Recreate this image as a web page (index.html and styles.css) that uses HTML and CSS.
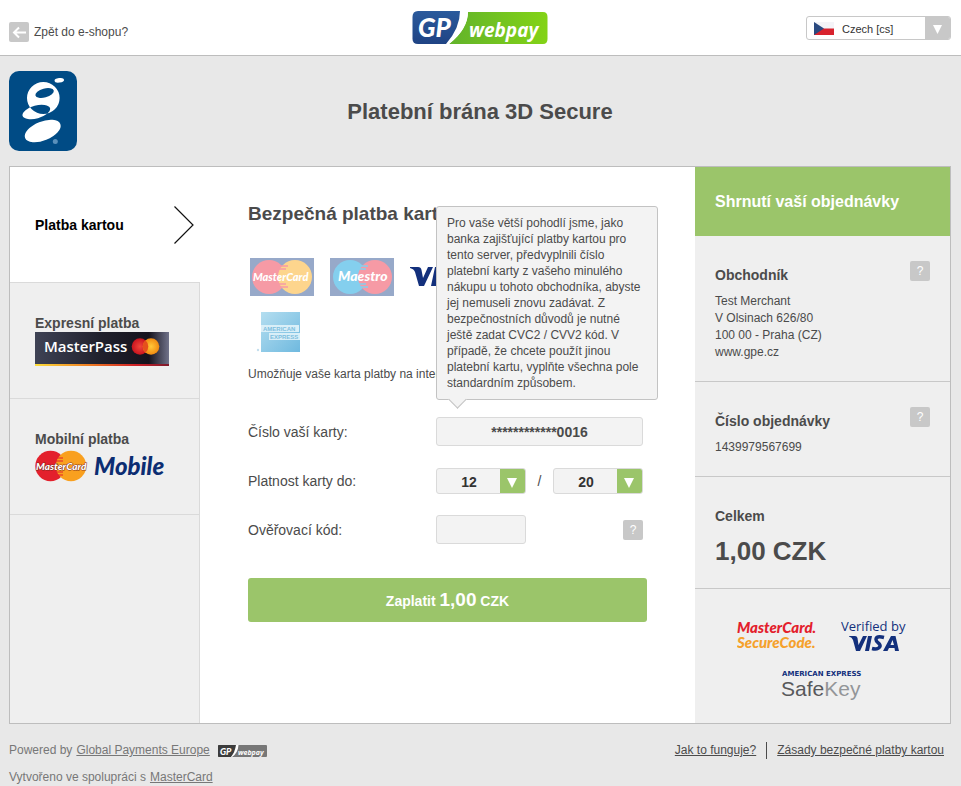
FILE: index.html
```
<!DOCTYPE html>
<html lang="cs">
<head>
    <meta charset="UTF-8">
    <meta name="viewport" content="width=device-width, initial-scale=1.0">
    <title>GP webpay</title>
    <link rel="stylesheet" href="styles.css">
</head>
<body>

<header class="topbar">
    <a class="back" href="#">
        <svg width="20" height="20" viewBox="0 0 20 20">
            <rect width="20" height="20" rx="2" fill="#c8c8c8"/>
            <path d="M17 10.500H5M10 5.500L5 10.500L10 15.500" fill="none" stroke="#fff" stroke-width="2"/>
        </svg>
        Zpět do e-shopu?
    </a>
    <svg class="brand" width="136" height="34" viewBox="0 0 136 34" role="img" aria-label="GP webpay">
        <defs>
            <linearGradient id="blue" x1="0" y1="0" x2="0" y2="1">
                <stop offset="0" stop-color="#2a5a9c"/><stop offset="1" stop-color="#1f4384"/>
            </linearGradient>
            <linearGradient id="green" x1="0" y1="0" x2="1" y2="0">
                <stop offset="0" stop-color="#62b32b"/><stop offset="1" stop-color="#83d316"/>
            </linearGradient>
        </defs>
        <path d="M56 1H131Q135.500 1 135.500 6V28Q135.500 33 131 33H37Q56 18 56 1Z" fill="url(#green)"/>
        <path d="M6 0H50Q50 17 36 33H6Q.5 33 .5 28V6Q.5 0 6 0Z" fill="url(#blue)"/>
        <path d="M48 0H56Q56 18 37 33H34Q48 17 48 0Z" fill="#fff"/>
        <text x="6" y="26" class="logo-gp">GP</text>
        <text x="57" y="26" class="logo-webpay">webpay</text>
    </svg>
    <div class="picker language">
        <svg class="flag" width="20" height="13" viewBox="0 0 20 13">
            <rect width="20" height="13" fill="#f4f4f8"/>
            <path d="M0 6.500H20V13H0Z" fill="#d8232e"/>
            <path d="M0 0L10 6.500L0 13Z" fill="#2b4a80"/>
        </svg>
        <select aria-label="Jazyk">
            <option>Czech [cs]</option>
        </select>
        <svg class="arrow" width="25" height="24" viewBox="0 0 25 24"><path d="M8 8H17L12.500 17Z" fill="#fff"/></svg>
    </div>
</header>

<div class="merchant">
    <svg width="68" height="80" viewBox="0 0 68 80">
        <rect width="68" height="80" rx="10" fill="#004b85"/>
        <g fill="#fff">
            <ellipse cx="50.300" cy="9.300" rx="4.800" ry="2.200" transform="rotate(-8 50.300 9.300)"/>
            <path fill-rule="evenodd" d="M18 27A16.300 16 0 0 1 50.600 27A16.300 16 0 0 1 18 27ZM13.500 44.700A14.300 6.700 -15 0 1 41.100 37.300A14.300 6.700 -15 0 1 13.500 44.700Z"/>
            <ellipse cx="33.700" cy="60" rx="19" ry="9.500" transform="rotate(-22 33.700 60)"/>
        </g>
        <ellipse cx="35.600" cy="22" rx="9.500" ry="4.400" transform="rotate(-15 35.600 22)" fill="#004b85"/>
        <circle cx="46.300" cy="70.500" r="2.500" fill="#5a90bb"/>
    </svg>
    <h1>Platební brána 3D Secure</h1>
</div>

<main class="panel">
    <nav class="tabs">
        <a class="tab active" href="#">
            Platba kartou
            <svg width="20" height="38" viewBox="0 0 20 38"><path d="M.5 .5L19 19L.5 37.500" fill="none" stroke="#111" stroke-width="1.200"/></svg>
        </a>
        <a class="tab" href="#">
            Expresní platba
            <svg width="134" height="34" viewBox="0 0 134 34" role="img" aria-label="MasterPass">
                <defs>
                    <linearGradient id="dark">
                        <stop offset="0" stop-color="#3e4254"/><stop offset=".5" stop-color="#20202c"/>
                        <stop offset=".85" stop-color="#15131d"/><stop offset="1" stop-color="#70728a"/>
                    </linearGradient>
                    <linearGradient id="stripe">
                        <stop offset="0" stop-color="#fbdc3a"/><stop offset=".4" stop-color="#ef7d22"/>
                        <stop offset=".75" stop-color="#cf2027"/><stop offset="1" stop-color="#7d1a2c"/>
                    </linearGradient>
                    <radialGradient id="red"><stop offset="0" stop-color="#f0453a"/><stop offset="1" stop-color="#c8141e"/></radialGradient>
                    <radialGradient id="gold"><stop offset="0" stop-color="#ffc83a"/><stop offset="1" stop-color="#f08a10"/></radialGradient>
                </defs>
                <rect width="134" height="32" fill="url(#dark)"/>
                <rect y="32" width="134" height="2" fill="url(#stripe)"/>
                <circle cx="105" cy="14.500" r="8.300" fill="url(#red)"/>
                <circle cx="116" cy="14.500" r="8.300" fill="url(#gold)"/>
                <path d="M110.500 8.300A8.300 8.300 0 0 1 110.500 20.700A8.300 8.300 0 0 1 110.500 8.300Z" fill="#e5501c"/>
                <text x="9" y="20" class="logo-pass">MasterPass</text>
            </svg>
        </a>
        <a class="tab" href="#">
            Mobilní platba
            <svg width="134" height="34" viewBox="0 0 134 34" role="img" aria-label="MasterCard Mobile">
                <circle cx="15.500" cy="18" r="15.200" fill="#e3202c"/>
                <circle cx="36" cy="18" r="15.200" fill="#f9a01f"/>
                <path d="M20 10H28M19 13H28M19 24H28M20 27H28" stroke="#e3202c"/>
                <text x="1" y="22" class="logo-card shade">MasterCard</text>
                <text x="59" y="27" class="logo-mobile">Mobile</text>
            </svg>
        </a>
    </nav>

    <form class="payment">
        <h2>Bezpečná platba kartou</h2>
        <ul class="cards">
            <li>
                <svg width="64" height="38" viewBox="0 0 64 38" role="img" aria-label="MasterCard">
                    <rect width="64" height="38" fill="#97a9c9"/>
                    <circle cx="19" cy="19" r="17" fill="#f69aa5"/>
                    <circle cx="45" cy="19" r="17" fill="#fdd58d"/>
                    <path d="M28 8H38M28 11H36M28 26H36M28 29H38" stroke="#f69aa5" stroke-width="1.500"/>
                    <text x="3" y="23" class="logo-card wide">MasterCard</text>
                </svg>
            </li>
            <li>
                <svg width="64" height="38" viewBox="0 0 64 38" role="img" aria-label="Maestro">
                    <rect width="64" height="38" fill="#97a9c9"/>
                    <circle cx="20" cy="19" r="17" fill="#84cfee"/>
                    <circle cx="45" cy="19" r="17" fill="#f69aa5"/>
                    <path d="M28 8H38M28 11H36M28 26H36M28 29H38" stroke="#84cfee" stroke-width="1.500"/>
                    <text x="8" y="23" class="logo-maestro">Maestro</text>
                </svg>
            </li>
            <li>
                <svg width="64" height="38" viewBox="0 0 64 38" role="img" aria-label="VISA">
                    <path d="M0 9H8Q11 9 11.500 12L13 20L18 9H23L14 28H9L5 14Q4 11 0 10Z" fill="#13307c"/>
                    <path d="M25 9H30L26 28H21ZM34 23H40L41 28H46L42 9H38Q36 9 35 11L27 28H32Z" fill="#13307c"/>
                </svg>
            </li>
            <li>
                <svg width="64" height="40" viewBox="0 0 64 40" role="img" aria-label="American Express">
                    <defs>
                        <linearGradient id="amex" x1="0" y1="0" x2="1" y2="1">
                            <stop offset="0" stop-color="#b4def0"/><stop offset="1" stop-color="#6fb9df"/>
                        </linearGradient>
                    </defs>
                    <rect x="11" width="39" height="40" fill="url(#amex)"/>
                    <path d="M11 13H49V20H11ZM19 21H50V28H19Z" fill="#d9eff8"/>
                    <text x="13" y="19" class="logo-amex">AMERICAN</text>
                    <text x="20" y="27" class="logo-amex">EXPRESS</text>
                    <circle cx="8" cy="38" r="1.200" fill="#c4dfee"/>
                </svg>
            </li>
        </ul>
        <p class="note">Umožňuje vaše karta platby na internetu?</p>

        <div class="row">
            <label for="number">Číslo vaší karty:</label>
            <div class="field">
                <input class="number" id="number" type="text" value="************0016">
                <div class="tooltip" role="tooltip">Pro vaše větší pohodlí jsme, jako<br>
                    banka zajišťující platby kartou pro<br>
                    tento server, předvyplnili číslo<br>
                    platební karty z vašeho minulého<br>
                    nákupu u tohoto obchodníka, abyste<br>
                    jej nemuseli znovu zadávat. Z<br>
                    bezpečnostních důvodů je nutné<br>
                    ještě zadat CVC2 / CVV2 kód. V<br>
                    případě, že chcete použít jinou<br>
                    platební kartu, vyplňte všechna pole<br>
                    standardním způsobem.</div>
            </div>
        </div>
        <div class="row">
            <label for="month">Platnost karty do:</label>
            <div class="field">
                <div class="picker expiry">
                    <select id="month"><option>12</option></select>
                    <svg class="arrow" width="25" height="26" viewBox="0 0 25 26"><path d="M7 9H17L12 19Z" fill="#fff"/></svg>
                </div>
                <span>/</span>
                <div class="picker expiry">
                    <select aria-label="Rok"><option>20</option></select>
                    <svg class="arrow" width="25" height="26" viewBox="0 0 25 26"><path d="M7 9H17L12 19Z" fill="#fff"/></svg>
                </div>
            </div>
        </div>
        <div class="row">
            <label for="code">Ověřovací kód:</label>
            <div class="field">
                <input class="code" id="code" type="text">
                <button class="help" type="button">?</button>
            </div>
        </div>
        <button class="pay" type="submit">Zaplatit <span>1,00</span> CZK</button>
    </form>

    <aside class="summary">
        <h2>Shrnutí vaší objednávky</h2>
        <section>
            <div class="title">
                <h3>Obchodník</h3>
                <button class="help" type="button">?</button>
            </div>
            <p>Test Merchant<br>V Olsinach 626/80<br>100 00 - Praha (CZ)<br>www.gpe.cz</p>
        </section>
        <section>
            <div class="title">
                <h3>Číslo objednávky</h3>
                <button class="help" type="button">?</button>
            </div>
            <p>1439979567699</p>
        </section>
        <section>
            <div class="title"><h3>Celkem</h3></div>
            <p class="total">1,00 CZK</p>
        </section>
        <div class="secure">
            <svg width="82" height="34" viewBox="0 0 82 34" role="img" aria-label="MasterCard SecureCode">
                <text x="0" y="15" class="logo-secure red">MasterCard.</text>
                <text x="0" y="30" class="logo-secure orange">SecureCode.</text>
            </svg>
            <svg width="66" height="36" viewBox="0 0 66 36" role="img" aria-label="Verified by VISA">
                <text x="0" y="13" class="logo-verified">Verified by</text>
                <path d="M8 18H14Q16 18 16.500 20L17.500 27L22 18H26L19 33H15L12 22Q11 19 8 18.500Z" fill="#13307c"/>
                <path d="M27 18H31L28 33H24Z" fill="#13307c"/>
                <path d="M43 19.500Q35 17.500 35 21.500C35 25 40 25 39 28.500Q37 32 31 30.500" fill="none" stroke="#13307c" stroke-width="3.500"/>
                <path fill-rule="evenodd" d="M50 18H54.500L58 33H54L53.500 30H48L46.500 33H42ZM51.500 22L49.500 27H53Z" fill="#13307c"/>
            </svg>
            <svg width="82" height="32" viewBox="0 0 82 32" role="img" aria-label="American Express SafeKey">
                <text x="1" y="6" class="logo-express">AMERICAN EXPRESS</text>
                <text x="0" y="26" class="logo-safe">Safe<tspan>Key</tspan></text>
            </svg>
        </div>
    </aside>
</main>

<footer class="footer">
    <div class="credits">
        <p>Powered by <a href="#">Global Payments Europe</a>
            <svg width="49" height="12" viewBox="0 0 49 12" role="img" aria-label="GP webpay">
                <rect width="49" height="12" rx="1" fill="#777"/>
                <path d="M1 0H18Q18 7 13 12H1Q0 12 0 11V1Q0 0 1 0Z" fill="#3c3c3c"/>
                <path d="M18 0H20.500Q20 8 14 12H13Q17 7 18 0Z" fill="#fff"/>
                <text x="2" y="10" class="logo-gp tiny">GP</text>
                <text x="20" y="9.500" class="logo-webpay tiny">webpay</text>
            </svg>
        </p>
        <p>Vytvořeno ve spolupráci s <a href="#">MasterCard</a></p>
    </div>
    <ul class="links">
        <li><a href="#">Jak to funguje?</a></li>
        <li><a href="#">Zásady bezpečné platby kartou</a></li>
    </ul>
</footer>

</body>
</html>
```
FILE: styles.css
```
* {
    box-sizing: border-box;
}
body {
    margin: 0;
    background-color: #e8e8e8;
    color: #4b4b4b;
    font-family: Arial, "Liberation Sans", sans-serif;
    font-size: 12px;
}
h1, h2, h3, p, ul {
    margin: 0;
    padding: 0;
}
svg {
    display: block;
}
a {
    color: inherit;
}
input, select, button {
    font-family: inherit;
    color: inherit;
    margin: 0;
}

/* Top bar */
.topbar {
    display: grid;
    grid-template-columns: 1fr auto 1fr;
    align-items: center;
    height: 56px;
    padding: 0 10px 0 9px;
    background-color: #fff;
    border-bottom: 1px solid #bdbdbd;
}
.back {
    display: flex;
    align-items: center;
    gap: 5px;
    padding-top: 8px;
    text-decoration: none;
}

/* Drop-downs */
.picker {
    display: grid;
    align-items: center;
    overflow: hidden;
    border: 1px solid #c8c8c8;
    border-radius: 3px;
}
.picker > * {
    grid-area: 1 / 1;
}
.picker select {
    width: 100%;
    height: 24px;
    border: none;
    appearance: none;
    background: none;
    color: #333;
}
.picker .arrow {
    justify-self: end;
    background-color: #c8c8c8;
    pointer-events: none;
}
.language {
    justify-self: end;
    width: 145px;
    height: 24px;
}
.language select {
    padding: 0 26px 0 35px;
    font-size: 11px;
}
.flag {
    margin-left: 7px;
}
.expiry {
    width: 90px;
    height: 26px;
    border-color: #dadada;
    background-color: #f3f3f3;
}
.expiry select {
    padding: 0 26px 0 2px;
    font-size: 14px;
    font-weight: bold;
    text-align-last: center;
}
.expiry .arrow {
    background-color: #9bc56a;
}

/* Merchant */
.merchant {
    display: grid;
    grid-template-columns: 68px 1fr 68px;
    align-items: center;
    padding: 15px 10px 15px 9px;
}
.merchant h1 {
    padding-top: 2px;
    font-size: 22px;
    text-align: center;
}

/* Main panel */
.panel {
    display: grid;
    grid-template-columns: 190px 1fr 255px;
    margin: 0 10px 0 9px;
    border: 1px solid #bdbdbd;
    background-color: #fff;
}
.tabs {
    background-color: #efefef;
    border-right: 1px solid #dadada;
}
.tab {
    display: flex;
    flex-direction: column;
    justify-content: center;
    height: 116px;
    padding: 0 0 2px 25px;
    border-top: 1px solid #dadada;
    font-size: 14px;
    font-weight: bold;
    line-height: 18px;
    text-decoration: none;
}
.tab:last-child {
    height: 117px;
    border-bottom: 1px solid #dadada;
}
.tab.active {
    flex-direction: row;
    align-items: center;
    justify-content: space-between;
    height: 115px;
    margin-right: -1px;
    padding: 0 6px 0 25px;
    border-top: none;
    background-color: #fff;
    color: #000;
}

/* Payment form */
.payment {
    padding: 35px 48px;
    font-size: 14px;
}
.payment h2 {
    margin-bottom: 32px;
    font-size: 19px;
    line-height: 24px;
}
.cards {
    display: flex;
    flex-wrap: wrap;
    gap: 16px;
    max-width: 240px;
    padding-left: 2px;
    list-style: none;
}
.note {
    margin: 14px 0 34px;
    font-size: 12px;
    line-height: 17px;
}
.row {
    display: grid;
    grid-template-columns: 188px 1fr;
    align-items: center;
    height: 29px;
    margin-bottom: 20px;
}
.field {
    position: relative;
    display: flex;
    align-items: center;
    justify-content: space-between;
    max-width: 207px;
}
.field input {
    height: 29px;
    border: 1px solid #dadada;
    border-radius: 3px;
    background-color: #f3f3f3;
    font-size: 14px;
    font-weight: bold;
    text-align: center;
}
.number {
    width: 100%;
}
.code {
    width: 90px;
}
.help {
    width: 20px;
    height: 20px;
    padding: 0;
    border: none;
    border-radius: 2px;
    background-color: #c8c8c8;
    color: #fff;
    font-size: 12px;
}
.tooltip {
    position: absolute;
    left: 0;
    bottom: 46px;
    width: 222px;
    padding: 8px 10px;
    border: 1px solid #c3c3c3;
    border-radius: 3px;
    background-color: #f3f3f3;
    font-size: 12px;
    line-height: 16px;
    white-space: nowrap;
}
.tooltip::after {
    content: "";
    position: absolute;
    left: 14px;
    bottom: -7px;
    width: 12px;
    height: 12px;
    border: solid #c3c3c3;
    border-width: 0 1px 1px 0;
    background-color: #f3f3f3;
    transform: rotate(45deg);
}
.pay {
    width: 100%;
    height: 44px;
    margin-top: 14px;
    border: none;
    border-radius: 3px;
    background-color: #9bc56a;
    color: #fff;
    font-size: 14px;
    font-weight: bold;
}
.pay span {
    font-size: 19px;
}

/* Order summary */
.summary {
    background-color: #efefef;
}
.summary h2 {
    padding: 0 20px;
    background-color: #9bc56a;
    color: #fff;
    font-size: 16px;
    line-height: 69px;
}
.summary section {
    padding: 25px 20px 20px;
    border-bottom: 1px solid #c8c8c8;
}
.title {
    display: flex;
    justify-content: space-between;
    margin-bottom: 4px;
}
.title h3 {
    font-size: 14px;
    line-height: 28px;
}
.summary p {
    line-height: 17px;
}
.summary .total {
    font-size: 26px;
    font-weight: bold;
    line-height: 34px;
}
.secure {
    display: flex;
    flex-wrap: wrap;
    justify-content: center;
    gap: 16px 22px;
    padding: 29px 31px 21px 29px;
}

/* Footer */
.footer {
    display: flex;
    justify-content: space-between;
    padding: 18px 17px 0 9px;
    line-height: 17px;
}
.credits {
    color: #777;
}
.credits p {
    display: flex;
    align-items: center;
    gap: 4px;
    margin-bottom: 10px;
}
.credits p:last-child {
    margin-bottom: 0;
}
.credits svg {
    margin-left: 4px;
}
.links {
    display: flex;
    align-items: flex-start;
    list-style: none;
}
.links li + li {
    margin-left: 10px;
    padding-left: 10px;
    border-left: 1px solid #4b4b4b;
}

/* Logo lettering */
.logo-gp {
    font: italic 900 26px Lato, sans-serif;
    fill: #fff;
}
.logo-webpay {
    font: italic bold 19px "Open Sans", sans-serif;
    fill: #fff;
}
.logo-gp.tiny {
    font-size: 9px;
}
.logo-webpay.tiny {
    font-size: 7px;
}
.logo-pass {
    font: 600 15px "Open Sans", sans-serif;
    fill: #fff;
}
.logo-card {
    font: italic 900 10px Lato, sans-serif;
    fill: #fff;
}
.logo-card.shade {
    paint-order: stroke;
    stroke: #7c2a1c;
    stroke-width: 1px;
}
.logo-card.wide {
    font-size: 11px;
}
.logo-maestro {
    font: italic 900 14px Lato, sans-serif;
    fill: #fff;
}
.logo-mobile {
    font: italic 900 24px Lato, sans-serif;
    fill: #0c2d72;
}
.logo-amex {
    font: bold 6px "Liberation Sans", sans-serif;
    fill: #7dbede;
}
.logo-secure {
    font: italic 900 15px Lato, sans-serif;
}
.logo-secure.red {
    fill: #e3202c;
}
.logo-secure.orange {
    fill: #f5a12c;
}
.logo-verified {
    font: 13px "Open Sans", sans-serif;
    fill: #13307c;
}
.logo-express {
    font: bold 7px "DejaVu Sans", sans-serif;
    fill: #13307c;
}
.logo-safe {
    font: 21px "Liberation Sans", sans-serif;
    fill: #58595b;
}
.logo-safe tspan {
    fill: #939598;
}
```
